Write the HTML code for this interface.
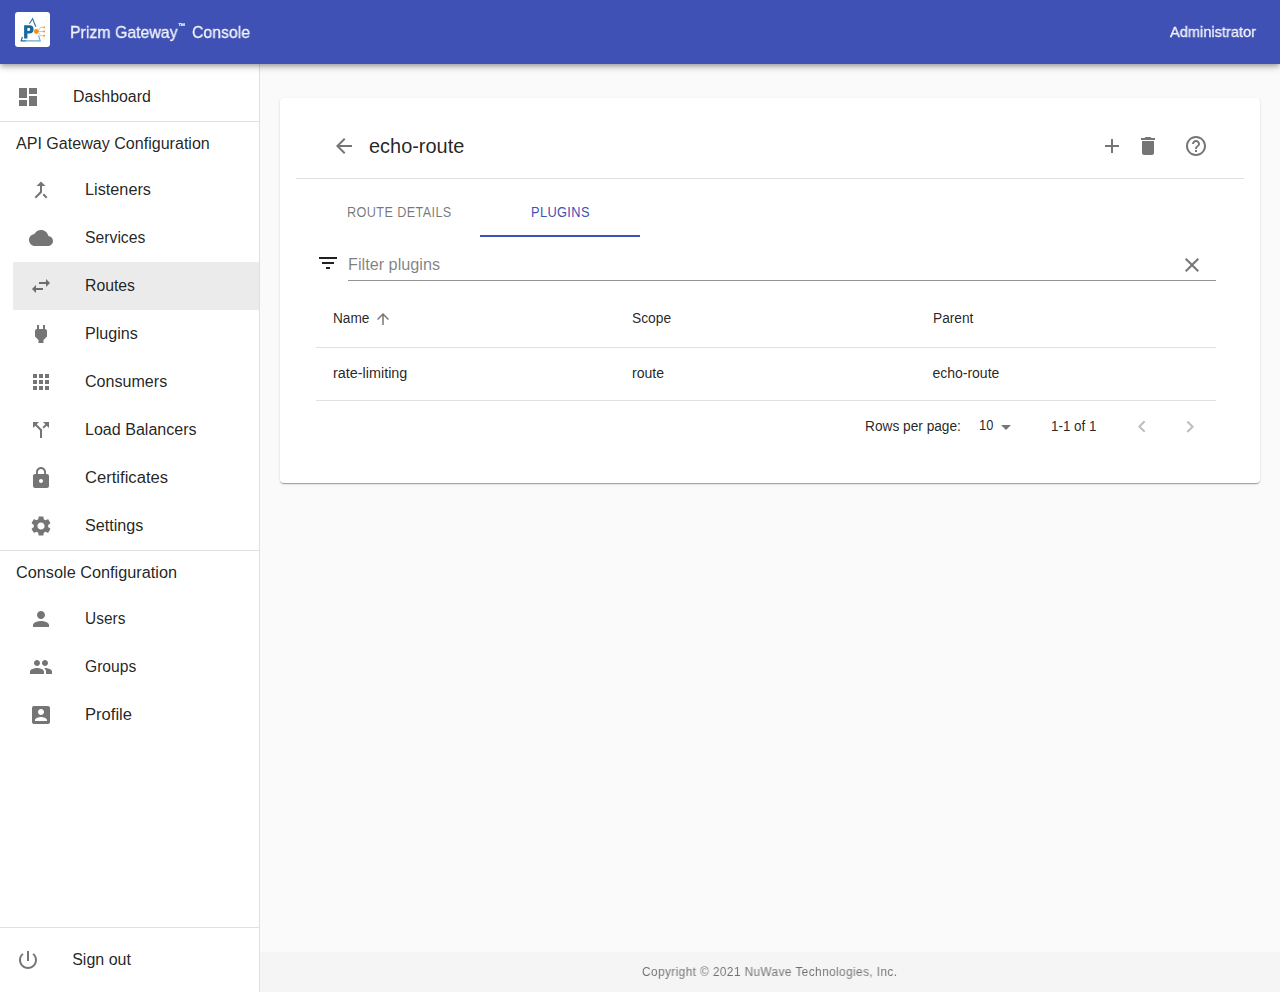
<!DOCTYPE html>
<html><head><meta charset="utf-8">
<style>
*{box-sizing:border-box;margin:0;padding:0}
html,body{width:1280px;height:992px;overflow:hidden;background:#fafafa;font-family:"Liberation Sans",sans-serif;color:rgba(0,0,0,0.87)}
.abs{position:absolute}
svg{display:block}
#appbar{position:absolute;left:0;top:0;width:1280px;height:64px;background:#3f51b5;z-index:5;
 box-shadow:0px 2px 4px -1px rgba(0,0,0,0.2),0px 4px 5px 0px rgba(0,0,0,0.14),0px 1px 10px 0px rgba(0,0,0,0.12)}
#logo{position:absolute;left:15px;top:12px;width:35px;height:35px;background:#fff;border-radius:3px;overflow:hidden}
#drawer{position:absolute;left:0;top:64px;width:260px;height:928px;background:#fff;border-right:1px solid rgba(0,0,0,0.12)}
.div{position:absolute;left:0;width:259px;height:1px;background:rgba(0,0,0,0.12)}
#footer{position:absolute;left:260px;top:952px;width:1020px;height:40px;background:#f5f5f5;text-align:center;font-size:12px;line-height:40px;color:rgba(0,0,0,0.54)}
#card{position:absolute;left:280px;top:98px;width:980px;height:385px;background:#fff;border-radius:4px;
 box-shadow:0px 2px 1px -1px rgba(0,0,0,0.2),0px 1px 1px 0px rgba(0,0,0,0.14),0px 1px 3px 0px rgba(0,0,0,0.12)}

</style></head><body>
<div id="appbar"><div id="logo"><svg width="35" height="35" viewBox="0 0 35 35"><g fill="none" stroke-linecap="butt"><path d="M14.4 11.7L17.6 6.8L20.8 14.7" stroke="#2a76a8" stroke-width="1.1"/><path d="M7.4 24.8L6.2 28.9H11.5" stroke="#1c6aa0" stroke-width="1.2"/><path d="M11.5 28.9H25.2L23.6 23.3" stroke="#6fa6c9" stroke-width="1.2"/><path d="M21.5 19.5H29.4M23.5 18.5L25.6 15.3H29.4M23.5 20.5L25.6 23.7H29.4" stroke="#f6a04a" stroke-width="0.7"/></g><path d="M9.1 13.2H14.6C17.2 13.2 18.6 14.7 18.6 17.3C18.6 19.9 17.1 21.6 14.5 21.6H12.4V26.6H9.1ZM12.4 16.1V18.9H13.9C14.7 18.9 15.1 18.3 15.1 17.5C15.1 16.7 14.7 16.1 13.9 16.1Z" fill="#17689e"/><circle cx="21.3" cy="19.5" r="2.4" fill="#f39019"/><circle cx="29.2" cy="15.3" r="0.9" fill="#f39019"/><circle cx="29.2" cy="19.5" r="0.9" fill="#f39019"/><circle cx="29.2" cy="23.7" r="0.9" fill="#f39019"/></svg>
</div><div style="position:absolute;left:69.90px;top:20px;font-size:17px;line-height:25px;white-space:nowrap;transform:scaleX(0.9336);transform-origin:0 0;color:rgba(255,255,255,0.92);-webkit-text-stroke:0.3px rgba(255,255,255,0.9);will-change:transform;">Prizm Gateway</div><div id="tm" style="position:absolute;left:178px;top:22px;font-size:7px;line-height:7px;color:rgba(255,255,255,0.92);-webkit-text-stroke:0.3px rgba(255,255,255,0.9);will-change:transform;">™</div><div style="position:absolute;left:192.00px;top:20px;font-size:17px;line-height:25px;white-space:nowrap;transform:scaleX(0.9299);transform-origin:0 0;color:rgba(255,255,255,0.92);-webkit-text-stroke:0.3px rgba(255,255,255,0.9);will-change:transform;">Console</div><div style="position:absolute;left:1169.80px;top:20px;font-size:15px;line-height:23px;white-space:nowrap;transform:scaleX(0.9743);transform-origin:0 0;color:rgba(255,255,255,0.92);-webkit-text-stroke:0.3px rgba(255,255,255,0.9);will-change:transform;">Administrator</div></div>
<div id="drawer"><svg class="abs" style="left:16px;top:21px;" width="24" height="24" viewBox="0 0 24 24"><path fill="rgba(0,0,0,0.54)" d="M3 13h8V3H3v10zm0 8h8v-6H3v6zm10 0h8V11h-8v10zm0-18v6h8V3h-8z"/></svg><div style="position:absolute;left:72.60px;top:21px;font-size:16px;line-height:24px;white-space:nowrap;transform:scaleX(0.9942);transform-origin:0 0;">Dashboard</div><div class="div" style="top:57px"></div><div style="position:absolute;left:16.00px;top:68px;font-size:16px;line-height:24px;white-space:nowrap;transform:scaleX(1.0041);transform-origin:0 0;">API Gateway Configuration</div><svg class="abs" style="left:29px;top:114px;" width="24" height="24" viewBox="0 0 24 24"><path fill="rgba(0,0,0,0.54)" d="M17 20.41L18.41 19 15 15.59 13.59 17 17 20.41zM7.5 8H11v5.59L5.59 19 7 20.41l6-6V8h3.5L12 3.5 7.5 8z"/></svg><div style="position:absolute;left:85.00px;top:114px;font-size:16px;line-height:24px;white-space:nowrap;transform:scaleX(1.0164);transform-origin:0 0;">Listeners</div><svg class="abs" style="left:29px;top:162px;" width="24" height="24" viewBox="0 0 24 24"><path fill="rgba(0,0,0,0.54)" d="M19.35 10.04C18.67 6.59 15.64 4 12 4 9.11 4 6.6 5.64 5.35 8.04 2.34 8.36 0 10.91 0 14c0 3.31 2.69 6 6 6h13c2.76 0 5-2.24 5-5 0-2.64-2.05-4.78-4.65-4.96z"/></svg><div style="position:absolute;left:85.00px;top:162px;font-size:16px;line-height:24px;white-space:nowrap;transform:scaleX(0.9841);transform-origin:0 0;">Services</div><div class="abs" style="left:13px;top:198px;width:246px;height:48px;background:rgba(0,0,0,0.08)"></div><svg class="abs" style="left:29px;top:210px;" width="24" height="24" viewBox="0 0 24 24"><path fill="rgba(0,0,0,0.54)" d="M6.99 11L3 15l3.99 4v-3H14v-2H6.99v-3zM21 9l-3.99-4v3H10v2h7.01v3L21 9z"/></svg><div style="position:absolute;left:85.00px;top:210px;font-size:16px;line-height:24px;white-space:nowrap;transform:scaleX(0.9864);transform-origin:0 0;">Routes</div><svg class="abs" style="left:29px;top:258px;" width="24" height="24" viewBox="0 0 24 24"><path fill="rgba(0,0,0,0.54)" d="M16.01 7L16 3h-2v4h-4V3H8v4h-.01C7 6.99 6 7.99 6 8.99v5.49L9.5 18v3h5v-3l3.5-3.51v-5.5c0-1-1-2-1.99-1.99z"/></svg><div style="position:absolute;left:85.00px;top:258px;font-size:16px;line-height:24px;white-space:nowrap;transform:scaleX(1.0076);transform-origin:0 0;">Plugins</div><svg class="abs" style="left:29px;top:306px;" width="24" height="24" viewBox="0 0 24 24"><path fill="rgba(0,0,0,0.54)" d="M4 8h4V4H4v4zm6 12h4v-4h-4v4zm-6 0h4v-4H4v4zm0-6h4v-4H4v4zm6 0h4v-4h-4v4zm6-10v4h4V4h-4zm-6 4h4V4h-4v4zm6 6h4v-4h-4v4zm0 6h4v-4h-4v4z"/></svg><div style="position:absolute;left:85.00px;top:306px;font-size:16px;line-height:24px;white-space:nowrap;transform:scaleX(1.0047);transform-origin:0 0;">Consumers</div><svg class="abs" style="left:29px;top:354px;" width="24" height="24" viewBox="0 0 24 24"><path fill="rgba(0,0,0,0.54)" d="M14 4l2.29 2.29-2.88 2.88 1.42 1.42 2.88-2.88L20 10V4zm-4 0H4v6l2.29-2.29 4.71 4.7V20h2v-8.41l-5.29-5.3z"/></svg><div style="position:absolute;left:85.00px;top:354px;font-size:16px;line-height:24px;white-space:nowrap;transform:scaleX(1.0037);transform-origin:0 0;">Load Balancers</div><svg class="abs" style="left:29px;top:402px;" width="24" height="24" viewBox="0 0 24 24"><path fill="rgba(0,0,0,0.54)" d="M18 8h-1V6c0-2.76-2.24-5-5-5S7 3.24 7 6v2H6c-1.1 0-2 .9-2 2v10c0 1.1.9 2 2 2h12c1.1 0 2-.9 2-2V10c0-1.1-.9-2-2-2zm-6 9c-1.1 0-2-.9-2-2s.9-2 2-2 2 .9 2 2-.9 2-2 2zm3.1-9H8.9V6c0-1.71 1.39-3.1 3.1-3.1 1.71 0 3.1 1.39 3.1 3.1v2z"/></svg><div style="position:absolute;left:85.00px;top:402px;font-size:16px;line-height:24px;white-space:nowrap;transform:scaleX(1.0375);transform-origin:0 0;">Certificates</div><svg class="abs" style="left:29px;top:450px;" width="24" height="24" viewBox="0 0 24 24"><path fill="rgba(0,0,0,0.54)" d="M19.14,12.94c0.04-0.3,0.06-0.61,0.06-0.94c0-0.32-0.02-0.64-0.07-0.94l2.03-1.58c0.18-0.14,0.23-0.41,0.12-0.61l-1.92-3.32c-0.12-0.22-0.37-0.29-0.59-0.22l-2.39,0.96c-0.5-0.38-1.03-0.7-1.62-0.94L14.4,2.81c-0.04-0.24-0.24-0.41-0.48-0.41h-3.84c-0.24,0-0.43,0.17-0.47,0.41L9.25,5.35C8.66,5.59,8.12,5.92,7.63,6.29L5.24,5.33c-0.22-0.08-0.47,0-0.59,0.22L2.74,8.87C2.62,9.08,2.66,9.34,2.86,9.48l2.03,1.58C4.84,11.36,4.8,11.69,4.8,12s0.02,0.64,0.07,0.94l-2.03,1.58c-0.18,0.14-0.23,0.41-0.12,0.61l1.92,3.32c0.12,0.22,0.37,0.29,0.59,0.22l2.39-0.96c0.5,0.38,1.03,0.7,1.62,0.94l0.36,2.54c0.05,0.24,0.24,0.41,0.48,0.41h3.84c0.24,0,0.44-0.17,0.47-0.41l0.36-2.54c0.59-0.24,1.13-0.56,1.62-0.94l2.39,0.96c0.22,0.08,0.47,0,0.59-0.22l1.92-3.32c0.12-0.22,0.07-0.47-0.12-0.61L19.14,12.94z M12,15.6c-1.98,0-3.6-1.62-3.6-3.6s1.62-3.6,3.6-3.6s3.6,1.62,3.6,3.6S13.98,15.6,12,15.6z"/></svg><div style="position:absolute;left:85.00px;top:450px;font-size:16px;line-height:24px;white-space:nowrap;transform:scaleX(1.0102);transform-origin:0 0;">Settings</div><div class="div" style="top:486px"></div><div style="position:absolute;left:16.00px;top:497px;font-size:16px;line-height:24px;white-space:nowrap;transform:scaleX(1.0170);transform-origin:0 0;">Console Configuration</div><svg class="abs" style="left:29px;top:543px;" width="24" height="24" viewBox="0 0 24 24"><path fill="rgba(0,0,0,0.54)" d="M12 12c2.21 0 4-1.79 4-4s-1.79-4-4-4-4 1.79-4 4 1.79 4 4 4zm0 2c-2.67 0-8 1.34-8 4v2h16v-2c0-2.66-5.33-4-8-4z"/></svg><div style="position:absolute;left:85.00px;top:543px;font-size:16px;line-height:24px;white-space:nowrap;transform:scaleX(0.9662);transform-origin:0 0;">Users</div><svg class="abs" style="left:29px;top:591px;" width="24" height="24" viewBox="0 0 24 24"><path fill="rgba(0,0,0,0.54)" d="M16 11c1.66 0 2.99-1.34 2.99-3S17.66 5 16 5c-1.66 0-3 1.34-3 3s1.34 3 3 3zm-8 0c1.66 0 2.99-1.34 2.99-3S9.66 5 8 5C6.34 5 5 6.34 5 8s1.34 3 3 3zm0 2c-2.33 0-7 1.17-7 3.5V19h14v-2.5c0-2.33-4.67-3.5-7-3.5zm8 0c-.29 0-.62.02-.97.05 1.16.84 1.97 1.97 1.97 3.45V19h6v-2.5c0-2.33-4.67-3.5-7-3.5z"/></svg><div style="position:absolute;left:85.00px;top:591px;font-size:16px;line-height:24px;white-space:nowrap;transform:scaleX(0.9771);transform-origin:0 0;">Groups</div><svg class="abs" style="left:29px;top:639px;" width="24" height="24" viewBox="0 0 24 24"><path fill="rgba(0,0,0,0.54)" d="M3 5v14c0 1.1.89 2 2 2h14c1.1 0 2-.9 2-2V5c0-1.1-.9-2-2-2H5c-1.11 0-2 .9-2 2zm12 4c0 1.66-1.34 3-3 3s-3-1.34-3-3 1.34-3 3-3 3 1.34 3 3zm-9 8c0-2 4-3.1 6-3.1s6 1.1 6 3.1v1H6v-1z"/></svg><div style="position:absolute;left:85.00px;top:639px;font-size:16px;line-height:24px;white-space:nowrap;transform:scaleX(1.0358);transform-origin:0 0;">Profile</div><div class="div" style="top:863px"></div><svg class="abs" style="left:16px;top:884px;" width="24" height="24" viewBox="0 0 24 24"><path fill="rgba(0,0,0,0.54)" d="M13 3h-2v10h2V3zm4.83 2.17l-1.42 1.42C17.99 7.86 19 9.81 19 12c0 3.87-3.13 7-7 7s-7-3.13-7-7c0-2.19 1.01-4.14 2.58-5.42L6.17 5.17C4.23 6.82 3 9.26 3 12c0 4.97 4.03 9 9 9s9-4.03 9-9c0-2.74-1.23-5.18-3.17-6.83z"/></svg><div style="position:absolute;left:72.20px;top:884px;font-size:16px;line-height:24px;white-space:nowrap;">Sign out</div></div>
<div id="card"><svg class="abs" style="left:52px;top:36px;" width="24" height="24" viewBox="0 0 24 24"><path fill="rgba(0,0,0,0.54)" d="M20 11H7.83l5.59-5.59L12 4l-8 8 8 8 1.41-1.41L7.83 13H20v-2z"/></svg><div style="position:absolute;left:88.60px;top:33.5px;font-size:20px;line-height:28px;white-space:nowrap;transform:scaleX(0.9966);transform-origin:0 0;">echo-route</div><svg class="abs" style="left:820px;top:36px;" width="24" height="24" viewBox="0 0 24 24"><path fill="rgba(0,0,0,0.54)" d="M19 13h-6v6h-2v-6H5v-2h6V5h2v6h6v2z"/></svg><svg class="abs" style="left:856px;top:36px;" width="24" height="24" viewBox="0 0 24 24"><path fill="rgba(0,0,0,0.54)" d="M6 19c0 1.1.9 2 2 2h8c1.1 0 2-.9 2-2V7H6v12zM19 4h-3.5l-1-1h-5l-1 1H5v2h14V4z"/></svg><svg class="abs" style="left:904px;top:36px;" width="24" height="24" viewBox="0 0 24 24"><path fill="rgba(0,0,0,0.54)" d="M11 18h2v-2h-2v2zm1-16C6.48 2 2 6.48 2 12s4.48 10 10 10 10-4.48 10-10S17.52 2 12 2zm0 18c-4.41 0-8-3.59-8-8s3.59-8 8-8 8 3.59 8 8-3.59 8-8 8zm0-14c-2.21 0-4 1.79-4 4h2c0-1.1.9-2 2-2s2 .9 2 2c0 2-3 1.75-3 5h2c0-2.25 3-2.5 3-5 0-2.21-1.79-4-4-4z"/></svg><div class="abs" style="left:16px;top:80px;width:948px;height:1px;background:rgba(0,0,0,0.12)"></div><div style="position:absolute;left:67.30px;top:102.5px;font-size:14px;line-height:22px;white-space:nowrap;letter-spacing:0.4px;transform:scaleX(0.9068);transform-origin:0 0;color:rgba(0,0,0,0.54);">ROUTE DETAILS</div><div style="position:absolute;left:250.80px;top:102.5px;font-size:14px;line-height:22px;white-space:nowrap;letter-spacing:0.4px;transform:scaleX(0.9148);transform-origin:0 0;color:#3f51b5;">PLUGINS</div><div class="abs" style="left:200px;top:137px;width:160px;height:2px;background:#3f51b5"></div><svg class="abs" style="left:36px;top:153px;" width="24" height="24" viewBox="0 0 24 24"><path fill="rgba(0,0,0,0.87)" d="M10 18h4v-2h-4v2zM3 6v2h18V6H3zm3 7h12v-2H6v2z"/></svg><div style="position:absolute;left:67.75px;top:154.60000000000002px;font-size:16px;line-height:24px;white-space:nowrap;transform:scaleX(1.0150);transform-origin:0 0;color:rgba(0,0,0,0.5);">Filter plugins</div><div class="abs" style="left:68px;top:182px;width:868px;height:1px;background:rgba(0,0,0,0.42)"></div><svg class="abs" style="left:900px;top:155px;" width="24" height="24" viewBox="0 0 24 24"><path fill="rgba(0,0,0,0.54)" d="M19 6.41L17.59 5 12 10.59 6.41 5 5 6.41 10.59 12 5 17.59 6.41 19 12 13.41 17.59 19 19 17.59 13.41 12z"/></svg><div style="position:absolute;left:52.60px;top:209px;font-size:14px;line-height:22px;white-space:nowrap;transform:scaleX(0.9766);transform-origin:0 0;">Name</div><svg class="abs" style="left:94px;top:212px;" width="18" height="18" viewBox="0 0 24 24"><path fill="rgba(0,0,0,0.54)" d="M4 12l1.41 1.41L11 7.83V20h2V7.83l5.58 5.59L20 12l-8-8-8 8z"/></svg><div style="position:absolute;left:352.25px;top:209px;font-size:14px;line-height:22px;white-space:nowrap;transform:scaleX(0.9839);transform-origin:0 0;">Scope</div><div style="position:absolute;left:652.70px;top:209px;font-size:14px;line-height:22px;white-space:nowrap;transform:scaleX(0.9794);transform-origin:0 0;">Parent</div><div class="abs" style="left:36px;top:249px;width:900px;height:1px;background:rgba(224,224,224,1)"></div><div style="position:absolute;left:52.60px;top:264px;font-size:14px;line-height:22px;white-space:nowrap;transform:scaleX(1.0280);transform-origin:0 0;">rate-limiting</div><div style="position:absolute;left:352.40px;top:264px;font-size:14px;line-height:22px;white-space:nowrap;transform:scaleX(1.0051);transform-origin:0 0;">route</div><div style="position:absolute;left:652.40px;top:264px;font-size:14px;line-height:22px;white-space:nowrap;">echo-route</div><div class="abs" style="left:36px;top:302px;width:900px;height:1px;background:rgba(224,224,224,1)"></div><div style="position:absolute;left:584.60px;top:317px;font-size:14px;line-height:22px;white-space:nowrap;transform:scaleX(0.9779);transform-origin:0 0;">Rows per page:</div><div style="position:absolute;left:698.50px;top:316px;font-size:14px;line-height:22px;white-space:nowrap;transform:scaleX(0.9189);transform-origin:0 0;">10</div><svg class="abs" style="left:714px;top:317px;" width="24" height="24" viewBox="0 0 24 24"><path fill="rgba(0,0,0,0.54)" d="M7 10l5 5 5-5z"/></svg><div style="position:absolute;left:770.50px;top:317px;font-size:14px;line-height:22px;white-space:nowrap;transform:scaleX(0.9579);transform-origin:0 0;">1-1 of 1</div><svg class="abs" style="left:850px;top:317px;" width="24" height="24" viewBox="0 0 24 24"><path fill="rgba(0,0,0,0.26)" d="M15.41 16.09l-4.58-4.59 4.58-4.59L14 5.5l-6 6 6 6z"/></svg><svg class="abs" style="left:898px;top:317px;" width="24" height="24" viewBox="0 0 24 24"><path fill="rgba(0,0,0,0.26)" d="M8.59 16.34l4.58-4.59-4.58-4.59L10 5.75l6 6-6 6z"/></svg></div>
<div id="footer"><div style="position:absolute;left:382.00px;top:10px;font-size:12px;line-height:20px;white-space:nowrap;letter-spacing:0.4px;transform:scaleX(0.9884);transform-origin:0 0;color:rgba(0,0,0,0.54);will-change:transform;">Copyright © 2021 NuWave Technologies, Inc.</div></div>
</body></html>
